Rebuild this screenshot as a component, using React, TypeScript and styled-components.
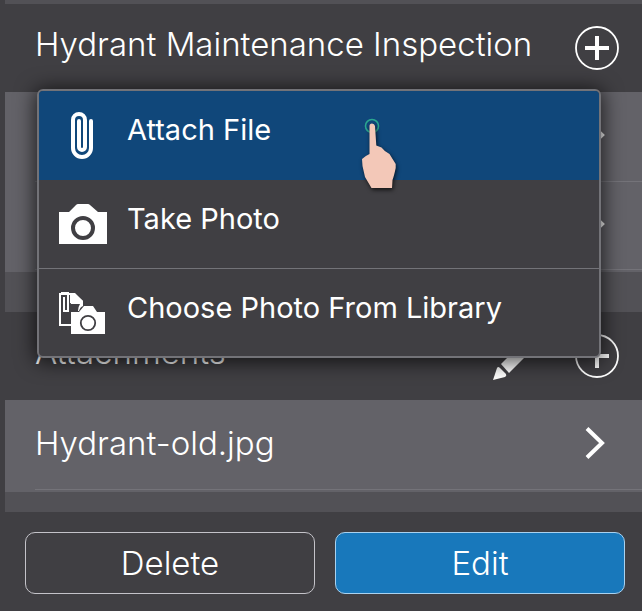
import React from "react";
import styled, { createGlobalStyle } from "styled-components";

const color = {
  base: "#403f43",
  gap: "#525156",
  row: "#636268",
  line: "#747379",
  popupLine: "#737378",
  selected: "#10477a",
  primary: "#1878bb",
};

const GlobalStyle = createGlobalStyle`
  * { box-sizing: border-box; }
  html, body, #root { height: 100%; }
  body {
    margin: 0;
    background: ${color.base};
    color: #fff;
    font-family: Inter, "Liberation Sans", sans-serif;
  }
  button { font: inherit; color: inherit; cursor: pointer; }
  ul { list-style: none; margin: 0; padding: 0; }
`;

const Page = styled.div`
  min-height: 100%;
  display: flex;
  flex-direction: column;
`;

const Content = styled.main`
  margin-left: 5px;
  padding: 4px 0 20px;
  background: ${color.gap};
  display: flex;
  flex-direction: column;
  gap: 40px;
`;

const Section = styled.section`
  position: relative;
`;

const SectionHeader = styled.header`
  height: 88px;
  padding: 0 23px 0 30px;
  display: flex;
  align-items: center;
  gap: 34px;
  background: ${color.base};
`;

const Title = styled.h2`
  flex: 1;
  margin: 0;
  padding-bottom: 8px;
  font-size: 33px;
  line-height: 40px;
  font-weight: 350;
  white-space: nowrap;
`;

const IconButton = styled.button`
  display: flex;
  padding: 0;
  border: 0;
  background: none;
`;

const RowList = styled.ul`
  padding-bottom: 2px;
  background: ${color.row};
`;

const RowItem = styled.li`
  margin-left: 30px;
  border-bottom: 1px solid ${color.line};

  & + & > button { height: 87px; }
`;

const RowButton = styled.button`
  width: 100%;
  height: 89px;
  padding: 0 37px 4px 0;
  display: flex;
  align-items: center;
  justify-content: space-between;
  border: 0;
  background: none;
  font-size: 33px;
  line-height: 40px;
  font-weight: 350;
  text-align: left;
`;

const Menu = styled.div`
  position: absolute;
  z-index: 1;
  top: 85px;
  left: 32px;
  right: 41px;
  border: 2px solid ${color.popupLine};
  border-radius: 6px;
  background: ${color.base};
  box-shadow: 0 2px 20px 2px rgba(0, 0, 0, 0.7);
`;

const MenuItem = styled.button<{ $selected?: boolean }>`
  width: 100%;
  height: 89px;
  padding: 0 20px;
  display: flex;
  align-items: center;
  gap: 20px;
  border: 0;
  border-bottom: 1px solid ${(p) => (p.$selected ? color.selected : color.popupLine)};
  background: ${(p) => (p.$selected ? color.selected : "none")};
  font-size: 29px;
  line-height: 36px;
  font-weight: 400;
  text-align: left;

  &:first-of-type { border-radius: 4px 4px 0 0; }
  &:last-of-type { height: 87px; border-bottom: 0; }
`;

const MenuIcon = styled.span`
  width: 48px;
  display: flex;
  justify-content: center;
`;

const MenuLabel = styled.span`
  padding-bottom: 10px;
  white-space: nowrap;
`;

const Pointer = styled.svg`
  position: absolute;
  top: 25px;
  left: 319px;
  pointer-events: none;
  overflow: visible;
`;

const Hand = styled.path`
  filter: drop-shadow(1px 2px 2px rgba(0, 0, 0, 0.7));
`;

const Footer = styled.footer`
  flex: 1;
  padding: 20px 17px 17px 25px;
  display: flex;
  align-items: flex-start;
  gap: 20px;
  background: ${color.base};
`;

const ActionButton = styled.button<{ $primary?: boolean }>`
  flex: 1;
  height: 62px;
  border: 1px solid ${(p) => (p.$primary ? "#a9d2f0" : "#c4c3c9")};
  border-radius: 10px;
  background: ${(p) => (p.$primary ? color.primary : "none")};
  font-size: 33px;
  line-height: 40px;
  font-weight: 350;
`;

const PlusIcon = () => (
  <svg width="44" height="44" viewBox="0 0 44 44" fill="none" stroke="#fff" aria-hidden="true">
    <circle cx="22" cy="22" r="21" strokeWidth="1.8" />
    <path d="M10 22H34M22 10V34" strokeWidth="4" />
  </svg>
);

const PencilIcon = () => (
  <svg width="48" height="48" viewBox="0 0 48 48" fill="#fff" aria-hidden="true">
    <path d="M0 48L4 36Q5 34 7 36L13 42Q14 44 12 45Z" />
    <path d="M8 32L16 41L37 20L28 12Z" />
    <path d="M30 10L39 18L44 13Q46 11 44 9L39 4Q37 2 35 5Z" />
  </svg>
);

const ChevronIcon = () => (
  <svg width="20" height="32" viewBox="0 0 20 32" fill="none" stroke="#fff" aria-hidden="true">
    <path d="M2 1.5L17 16L2 30.5" strokeWidth="4" />
  </svg>
);

const PaperclipIcon = () => (
  <svg width="24" height="47" viewBox="0 0 24 47" fill="none" stroke="#fff" aria-hidden="true">
    <path
      d="M20 9V36A9 9 0 0 1 2 36V8A6 6 0 0 1 14 8V35A3 3 0 0 1 8 35V9"
      strokeWidth="4"
      strokeLinecap="round"
    />
  </svg>
);

const CameraIcon = () => (
  <svg width="48" height="40" viewBox="0 0 48 40" aria-hidden="true">
    <path d="M0 8H10L17 1Q18 0 19 0H29Q30 0 31 1L39 8H48V40H0Z" fill="#fff" />
    <circle cx="24" cy="24" r="10" fill="none" stroke={color.base} strokeWidth="4" />
  </svg>
);

const LibraryIcon = () => (
  <svg width="48" height="42" viewBox="0 0 48 42" aria-hidden="true">
    <path d="M1 1.5V33H12" fill="none" stroke="#fff" strokeWidth="2" />
    <path d="M0 1H2V0H10V1H16L24 9V14Q21 15 20 19H12V12H20Q21 12 21 11H11V3H0Z" fill="#fff" />
    <path d="M11 2H16L24 9V13H12Z" fill="#fff" />
    <path d="M12 12H21Q19 15 19 19H12Z" fill={color.base} />
    <path d="M9 3V19H5V5" fill="none" stroke="#fff" strokeWidth="2" />
    <path d="M12 20H20L25 14H34L38 20H46V42H12Z" fill="#fff" />
    <circle cx="29" cy="31" r="7.2" fill="none" stroke={color.base} strokeWidth="1.8" />
  </svg>
);

const TouchPointer = () => (
  <Pointer width="44" height="76" viewBox="0 0 44 76" aria-hidden="true">
    <circle cx="14" cy="10" r="6.5" fill="none" stroke="#2ba790" strokeWidth="1.6" />
    <Hand
      d="M11.5 10Q11.5 7.5 14 7.5Q16.5 7.5 17 10L18.3 29.5L23.5 31.5Q26 35 31.5 38L37.7 48V52Q36 60 34.5 64L34 72H13.5L7 61L4.5 50L4 43Q8 39.5 11.5 38Z"
      fill="#f3c8b8"
    />
  </Pointer>
);

export default function App() {
  return (
    <>
      <GlobalStyle />
      <Page>
        <Content>
          <Section>
            <SectionHeader>
              <Title>Hydrant Maintenance Inspection</Title>
              <IconButton type="button" aria-label="Add inspection">
                <PlusIcon />
              </IconButton>
            </SectionHeader>
            <RowList>
              {["First inspection", "Second inspection"].map((name) => (
                <RowItem key={name}>
                  <RowButton type="button" aria-label={name}>
                    <span />
                    <ChevronIcon />
                  </RowButton>
                </RowItem>
              ))}
            </RowList>
            <Menu role="menu">
              <MenuItem type="button" role="menuitem" $selected>
                <MenuIcon><PaperclipIcon /></MenuIcon>
                <MenuLabel>Attach File</MenuLabel>
              </MenuItem>
              <MenuItem type="button" role="menuitem">
                <MenuIcon><CameraIcon /></MenuIcon>
                <MenuLabel>Take Photo</MenuLabel>
              </MenuItem>
              <MenuItem type="button" role="menuitem">
                <MenuIcon><LibraryIcon /></MenuIcon>
                <MenuLabel>Choose Photo From Library</MenuLabel>
              </MenuItem>
              <TouchPointer />
            </Menu>
          </Section>
          <Section>
            <SectionHeader>
              <Title>Attachments</Title>
              <IconButton type="button" aria-label="Edit attachments">
                <PencilIcon />
              </IconButton>
              <IconButton type="button" aria-label="Add attachment">
                <PlusIcon />
              </IconButton>
            </SectionHeader>
            <RowList>
              <RowItem>
                <RowButton type="button">
                  <span>Hydrant-old.jpg</span>
                  <ChevronIcon />
                </RowButton>
              </RowItem>
            </RowList>
          </Section>
        </Content>
        <Footer>
          <ActionButton type="button">Delete</ActionButton>
          <ActionButton type="button" $primary>Edit</ActionButton>
        </Footer>
      </Page>
    </>
  );
}
